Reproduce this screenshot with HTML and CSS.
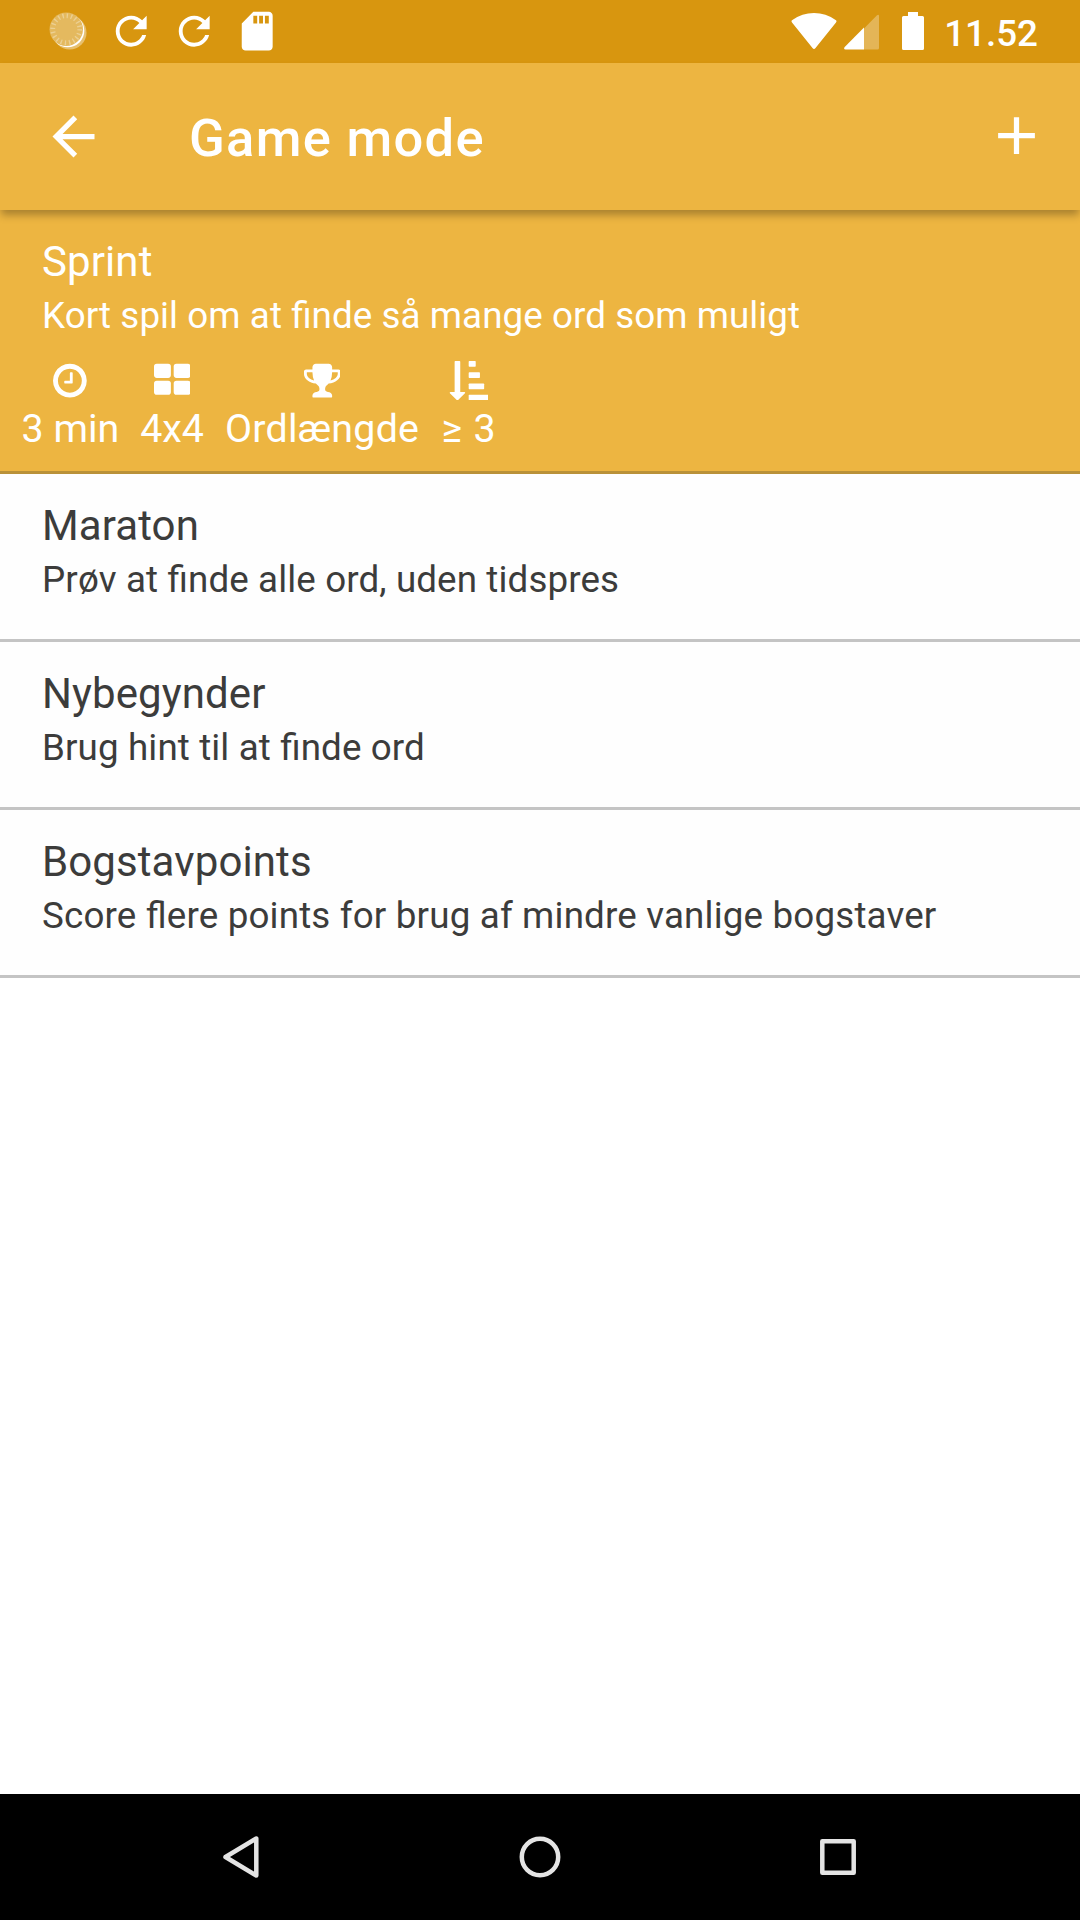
FILE: index.html
```html
<!DOCTYPE html>
<html lang="da">
<head>
<meta charset="utf-8">
<title>Game mode</title>
<link rel="stylesheet" href="styles.css">
</head>
<body>
<div class="screen">
  <div class="status-bar">
    <div class="notifications">
      <svg class="status-icon" viewBox="0 0 48 48">
        <circle cx="25.5" cy="25.5" r="17.5" fill="#fff" fill-opacity=".4"/>
        <circle cx="23.5" cy="23.5" r="17.2" fill="#fff"/>
        <circle cx="22" cy="22" r="17.3" fill="#e4b95f"/>
        <circle cx="22" cy="22" r="14" fill="none" stroke="#ecd093" stroke-width="5" stroke-dasharray="1.4 2.998"/>
      </svg>
      <svg class="status-icon" viewBox="0 0 24 24"><path fill="#fff" d="M17.65 6.35C16.2 4.9 14.21 4 12 4c-4.42 0-7.99 3.58-7.99 8s3.57 8 7.99 8c3.73 0 6.84-2.55 7.73-6h-2.08c-.82 2.33-3.04 4-5.65 4-3.31 0-6-2.69-6-6s2.69-6 6-6c1.66 0 3.14.69 4.22 1.78L13 11h7V4l-2.35 2.35z"/></svg>
      <svg class="status-icon" viewBox="0 0 24 24"><path fill="#fff" d="M17.65 6.35C16.2 4.9 14.21 4 12 4c-4.42 0-7.99 3.58-7.99 8s3.57 8 7.99 8c3.73 0 6.84-2.55 7.73-6h-2.08c-.82 2.33-3.04 4-5.65 4-3.31 0-6-2.69-6-6s2.69-6 6-6c1.66 0 3.14.69 4.22 1.78L13 11h7V4l-2.35 2.35z"/></svg>
      <svg class="status-icon" viewBox="0 0 24 24"><path fill="#fff" d="M18 2h-8L4.02 8 4 20c0 1.1.9 2 2 2h12c1.1 0 2-.9 2-2V4c0-1.1-.9-2-2-2zm-6 6h-2V4h2v4zm3 0h-2V4h2v4zm3 0h-2V4h2v4z"/></svg>
    </div>
    <div class="system">
      <svg class="wifi" viewBox="0 0 46 38"><path fill="#fff" d="M1 10.5Q-.2 9 1.4 8Q11 1 23 1Q35 1 44.600 8Q46.200 9 45 10.500L24.500 36Q23 38 21.500 36Z"/></svg>
      <svg class="signal" viewBox="0 0 35 36"><path fill="#fff" fill-opacity=".3" d="M20 14.500L33 1.200Q35 0 35 2V34Q35 35.500 33.500 35.500H20Z"/><path fill="#fff" d="M20 13.500V35.500H1.500Q-.8 35.200 .7 33Z"/></svg>
      <svg class="battery" viewBox="0 0 22 38"><path fill="#fff" d="M6 0H16V4H20.500Q22 4 22 5.500V36.500Q22 38 20.500 38H1.500Q0 38 0 36.500V5.500Q0 4 1.500 4H6Z"/></svg>
      <span class="clock">11.52</span>
    </div>
  </div>

  <header class="app-bar">
    <svg class="action-icon" viewBox="0 0 24 24"><path fill="#fff" d="M20 11H7.830l5.590-5.590L12 4l-8 8 8 8 1.410-1.410L7.830 13H20v-2z"/></svg>
    <h1 class="title">Game mode</h1>
    <svg class="action-icon add" viewBox="0 0 24 24"><path fill="#fff" d="M19 13h-6v6h-2v-6H5v-2h6V5h2v6h6v2z"/></svg>
  </header>

  <main class="modes">
    <section class="mode selected">
      <h2 class="mode-name">Sprint</h2>
      <p class="mode-info">Kort spil om at finde så mange ord som muligt</p>
      <div class="stats">
        <div class="stat">
          <svg class="stat-icon" viewBox="0 0 1536 1792"><path fill="#fff" d="M896 544v448q0 14-9 23t-23 9h-320q-14 0-23-9t-9-23v-64q0-14 9-23t23-9h224v-352q0-14 9-23t23-9h64q14 0 23 9t9 23zM1312 896q0-148-73-273t-198-198-273-73-273 73-198 198-73 273 73 273 198 198 273 73 273-73 198-198 73-273zM1536 896q0 209-103 385.500t-279.500 279.500-385.500 103-385.500-103-279.500-279.500-103-385.500 103-385.500 279.500-279.500 385.500-103 385.500 103 279.500 279.500 103 385.500z"/></svg>
          <span>3 min</span>
        </div>
        <div class="stat">
          <svg class="stat-icon" viewBox="0 0 1664 1792" fill="#fff"><rect y="128" width="768" height="640" rx="128"/><rect x="896" y="128" width="768" height="640" rx="128"/><rect y="896" width="768" height="640" rx="128"/><rect x="896" y="896" width="768" height="640" rx="128"/></svg>
          <span>4x4</span>
        </div>
        <div class="stat">
          <svg class="stat-icon" viewBox="0 0 1664 1792"><path fill="#fff" d="M458 883q-74-162-74-371h-256v96q0 78 94.500 162t235.500 113zM1536 608v-96h-256q0 209-74 371 141-29 235.500-113t94.500-162zM1664 480v128q0 71-41.500 143t-112 130-173 97.500-215.500 44.500q-42 54-95 95-38 34-52.500 72.500t-14.500 89.500q0 54 30.500 91t97.500 37q75 0 133.500 45.500t58.500 114.500v64q0 14-9 23t-23 9h-832q-14 0-23-9t-9-23v-64q0-69 58.500-114.500t133.500-45.500q67 0 97.500-37t30.500-91q0-51-14.500-89.500t-52.500-72.500q-53-41-95-95-113-5-215.500-44.500t-173-97.500-112-130-41.500-143v-128q0-40 28-68t68-28h288v-96q0-66 47-113t113-47h576q66 0 113 47t47 113v96h288q40 0 68 28t28 68z"/></svg>
          <span class="stat-scoring">Ordlængde</span>
        </div>
        <div class="stat">
          <svg class="stat-icon" viewBox="0 0 1792 1792" fill="#fff"><path d="M736 1440q0 12-10 24l-319 319q-10 9-23 9-12 0-23-9l-320-320q-15-16-7-35 8-20 30-20h192v-1376q0-14 9-23t23-9h192q14 0 23 9t9 23v1376h192q14 0 23 9t9 23z"/><rect x="896" width="320" height="256" rx="32"/><rect x="896" y="512" width="512" height="256" rx="32"/><rect x="896" y="1024" width="704" height="256" rx="32"/><rect x="896" y="1536" width="896" height="256" rx="32"/></svg>
          <span class="stat-minimum">≥ 3</span>
        </div>
      </div>
    </section>
    <section class="mode">
      <h2 class="mode-name">Maraton</h2>
      <p class="mode-info">Prøv at finde alle ord, uden tidspres</p>
    </section>
    <section class="mode">
      <h2 class="mode-name">Nybegynder</h2>
      <p class="mode-info">Brug hint til at finde ord</p>
    </section>
    <section class="mode">
      <h2 class="mode-name">Bogstavpoints</h2>
      <p class="mode-info">Score flere points for brug af mindre vanlige bogstaver</p>
    </section>
  </main>

  <nav class="nav-bar">
    <svg class="nav-icon" viewBox="0 0 48 48"><path d="M7.500 24L38.300 5.500V42.500Z"/></svg>
    <svg class="nav-icon" viewBox="0 0 48 48"><circle cx="24" cy="24" r="18.200"/></svg>
    <svg class="nav-icon" viewBox="0 0 48 48"><path d="M8.300 8.300H39.700V39.700H8.300Z"/></svg>
  </nav>
</div>
</body>
</html>
```
FILE: styles.css
```css
* {
  box-sizing: border-box;
  margin: 0;
  padding: 0;
}

body {
  font-family: Roboto, sans-serif;
  background: #fff;
  color: #3c3c3b;
}

svg {
  display: block;
  flex: none;
}

.screen {
  display: flex;
  flex-direction: column;
  width: 1080px;
  height: 1920px;
  overflow: hidden;
}

.status-bar {
  display: flex;
  justify-content: space-between;
  height: 63px;
  background: #d8960f;
  color: #fff;
}

.notifications {
  display: flex;
  align-items: center;
  gap: 16.6px;
  padding-left: 45.3px;
}

.status-icon {
  width: 46.4px;
  height: 46.4px;
}

.system {
  display: flex;
  align-items: flex-start;
  padding: 12px 42px 0 0;
}

.wifi {
  width: 46px;
  height: 38px;
  margin-right: 7px;
}

.signal {
  width: 35px;
  height: 36px;
  margin: 2px 23px 0 0;
}

.battery {
  width: 22px;
  height: 38px;
  margin-right: 19.8px;
}

.clock {
  font-size: 36.75px;
  font-weight: 500;
  line-height: 43px;
}

.app-bar {
  position: relative;
  z-index: 1;
  display: flex;
  align-items: center;
  height: 147px;
  padding: 0 32px 0 42px;
  background: #edb541;
  color: #fff;
  box-shadow: 0 6px 8px -1px rgba(0, 0, 0, .29);
}

.action-icon {
  width: 63px;
  height: 63px;
}

.add {
  margin: 0 0 2px auto;
}

.title {
  margin-left: 84px;
  padding-top: 2px;
  font-size: 52.5px;
  font-weight: 500;
  line-height: 62px;
  letter-spacing: 1.3px;
}

.modes {
  flex: 1;
}

.mode {
  height: 168px;
  padding: 27px 42px 0;
  background: #fefefe;
  border-bottom: 3px solid #c4c4c4;
}

.selected {
  height: 264px;
  background: #edb541;
  color: #fff;
  border-bottom-color: #b99139;
}

.mode-name {
  font-size: 42px;
  font-weight: 400;
  line-height: 50px;
  letter-spacing: .1px;
}

.mode-info {
  margin-top: 7px;
  font-size: 36.75px;
  line-height: 44px;
  letter-spacing: .12px;
  font-feature-settings: "liga" 1;
}

.selected .mode-info {
  letter-spacing: .07px;
}

.mode:last-child .mode-info {
  letter-spacing: .17px;
}

.stats {
  display: flex;
  gap: 21px;
  margin: 22.6px 0 0 -20.5px;
}

.stat {
  display: flex;
  flex-direction: column;
  align-items: center;
  gap: 6.4px;
  font-size: 39.375px;
  line-height: 46px;
}

.stat-scoring {
  letter-spacing: .25px;
}

.stat-minimum {
  padding: 0 1px;
  word-spacing: 2px;
}

.stat-icon {
  height: 39.375px;
}

.nav-bar {
  display: grid;
  grid-template-columns: repeat(3, 298px);
  justify-content: center;
  align-items: center;
  justify-items: center;
  height: 126px;
  background: #000;
}

.nav-icon {
  width: 48px;
  height: 48px;
  fill: none;
  stroke: #e4e4e4;
  stroke-width: 4.5;
  stroke-linejoin: round;
}
```
